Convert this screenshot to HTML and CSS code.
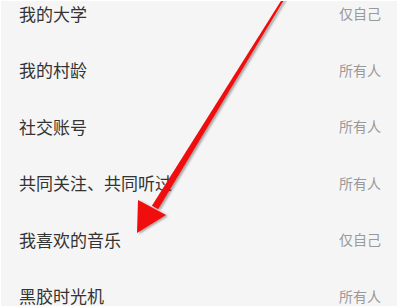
FILE: index.html
```html
<!DOCTYPE html>
<html lang="zh-CN">
<head>
    <meta charset="UTF-8">
    <meta name="viewport" content="width=device-width, initial-scale=1.0">
    <title>隐私设置</title>
    <link rel="stylesheet" href="styles.css">
</head>
<body>

<div class="screen">
    <ul class="list">
        <li class="row"><span class="name">我的大学</span><span class="value">仅自己</span></li>
        <li class="row"><span class="name">我的村龄</span><span class="value">所有人</span></li>
        <li class="row"><span class="name">社交账号</span><span class="value">所有人</span></li>
        <li class="row"><span class="name">共同关注、共同听过</span><span class="value">所有人</span></li>
        <li class="row"><span class="name">我喜欢的音乐</span><span class="value">仅自己</span></li>
        <li class="row"><span class="name">黑胶时光机</span><span class="value">所有人</span></li>
    </ul>

    <!-- 红色箭头标注 -->
    <svg class="arrow" width="400" height="306" viewBox="0 0 400 306">
        <defs>
            <filter id="shadow" x="-20%" y="-20%" width="140%" height="140%">
                <feDropShadow dx="2" dy="1" stdDeviation="1.2" flood-color="#000" flood-opacity="0.35"/>
            </filter>
        </defs>
        <g filter="url(#shadow)" fill="#f01010">
            <polygon points="283.1,-2.5 284.9,-1.5 158.1,209.3 151.9,205.7"/>
            <polygon points="138,200 166,215 137,233"/>
        </g>
    </svg>
</div>

</body>
</html>
```

FILE: styles.css
```css
body {
    margin: 0;
    background: #fff;
    font-family: "Noto Sans CJK SC", "Noto Sans", sans-serif;
}

.screen {
    position: relative;
    margin: 1px 3px 0 1px;
    height: 305px;
    overflow: hidden;
    background: #f5f5f5;
}

.list {
    list-style: none;
    margin: -16px 0 0 0;
    padding: 0;
}

.row {
    display: flex;
    justify-content: space-between;
    align-items: center;
    height: 56.5px;
    padding: 0 16px 0 18px;
}

.name {
    font-size: 17px;
    color: #333;
}

.value {
    font-size: 14px;
    color: #999;
}

/* 箭头盖在列表上面 */
.arrow {
    position: absolute;
    top: -1px;
    left: -1px;
}
```
